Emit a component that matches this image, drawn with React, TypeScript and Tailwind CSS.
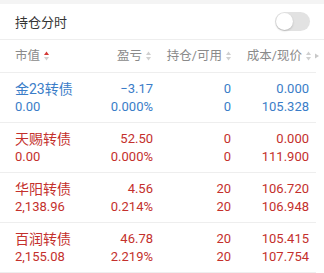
import React from 'react';

type Row = {
  name: string;
  value: string;
  pl: string;
  plPct: string;
  hold: string;
  avail: string;
  cost: string;
  price: string;
  up: boolean;
};

const rows: Row[] = [
  { name: '金23转债', value: '0.00', pl: '\u22123.17', plPct: '0.000%', hold: '0', avail: '0', cost: '0.000', price: '105.328', up: false },
  { name: '天赐转债', value: '0.00', pl: '52.50', plPct: '0.000%', hold: '0', avail: '0', cost: '0.000', price: '111.900', up: true },
  { name: '华阳转债', value: '2,138.96', pl: '4.56', plPct: '0.214%', hold: '20', avail: '20', cost: '106.720', price: '106.948', up: true },
  { name: '百润转债', value: '2,155.08', pl: '46.78', plPct: '2.219%', hold: '20', avail: '20', cost: '105.415', price: '107.754', up: true },
];

const SortIcon = ({ active }: { active?: boolean }) => (
  <svg width="5" height="10" viewBox="0 0 5 10" className="ml-[4px] shrink-0">
    <path d="M2.5 0.5 L5 4 L0 4 Z" fill={active ? '#d43a36' : '#d0d0d0'} />
    <path d="M2.5 9.5 L5 6 L0 6 Z" fill="#d0d0d0" />
  </svg>
);

export default function App() {
  return (
    <div className="w-[324px] h-[273px] bg-[#f4f4f4] pt-[4px] overflow-hidden" style={{ fontFamily: 'Roboto, "Noto Sans CJK SC", sans-serif' }}>
      <div className="bg-white">
        {/* 标题 */}
        <div className="flex items-center justify-between h-[36px] pl-[15px] pr-[14px] border-b border-[#eeeeee]">
          <span className="text-[13px] text-[#333333] pt-[2px]">持仓分时</span>
          <div className="relative w-[35px] h-[19px] rounded-full bg-[#e2e2e2]">
            <div className="absolute left-[1px] top-[1px] w-[17px] h-[17px] rounded-full bg-white shadow-[0_1px_2px_rgba(0,0,0,0.2)]" />
          </div>
        </div>

        {/* 表头 */}
        <div className="h-[33px] mr-[8px] border-b border-[#eeeeee]">
          <div className="flex items-center h-full w-[324px] pl-[15px] text-[12.5px] text-[#8a8a8a]">
            <div className="w-[80px] shrink-0 flex items-center">市值<SortIcon active /></div>
            <div className="w-[56px] shrink-0 flex items-center justify-end">盈亏<SortIcon /></div>
            <div className="w-[80px] shrink-0 flex items-center justify-end">持仓/可用<SortIcon /></div>
            <div className="w-[80px] shrink-0 flex items-center justify-end">成本/现价<SortIcon /></div>
            <svg width="4" height="6" viewBox="0 0 4 6" className="ml-[4px] shrink-0">
              <path d="M0 0.5 L4 3 L0 5.5 Z" fill="#c8c8c8" />
            </svg>
          </div>
        </div>

        {rows.map((r) => {
          const color = r.up ? 'text-[#c4302c]' : 'text-[#3a7dc8]';
          return (
            <div key={r.name} className={`flex h-[50px] pl-[15px] mr-[8px] border-b border-[#eeeeee] ${color}`}>
              <div className="w-[80px] flex flex-col justify-center">
                <div className="text-[14px] leading-[18px]">{r.name}</div>
                <div className="text-[13px] leading-[17px]">{r.value}</div>
              </div>
              <div className="w-[58px] flex flex-col justify-center items-end">
                <div className="text-[13px] leading-[18px]">{r.pl}</div>
                <div className="text-[13px] leading-[17px]">{r.plPct}</div>
              </div>
              <div className="w-[78px] flex flex-col justify-center items-end">
                <div className="text-[13px] leading-[18px]">{r.hold}</div>
                <div className="text-[13px] leading-[17px]">{r.avail}</div>
              </div>
              <div className="w-[78px] flex flex-col justify-center items-end">
                <div className="text-[13px] leading-[18px]">{r.cost}</div>
                <div className="text-[13px] leading-[17px]">{r.price}</div>
              </div>
            </div>
          );
        })}
      </div>
    </div>
  );
}
